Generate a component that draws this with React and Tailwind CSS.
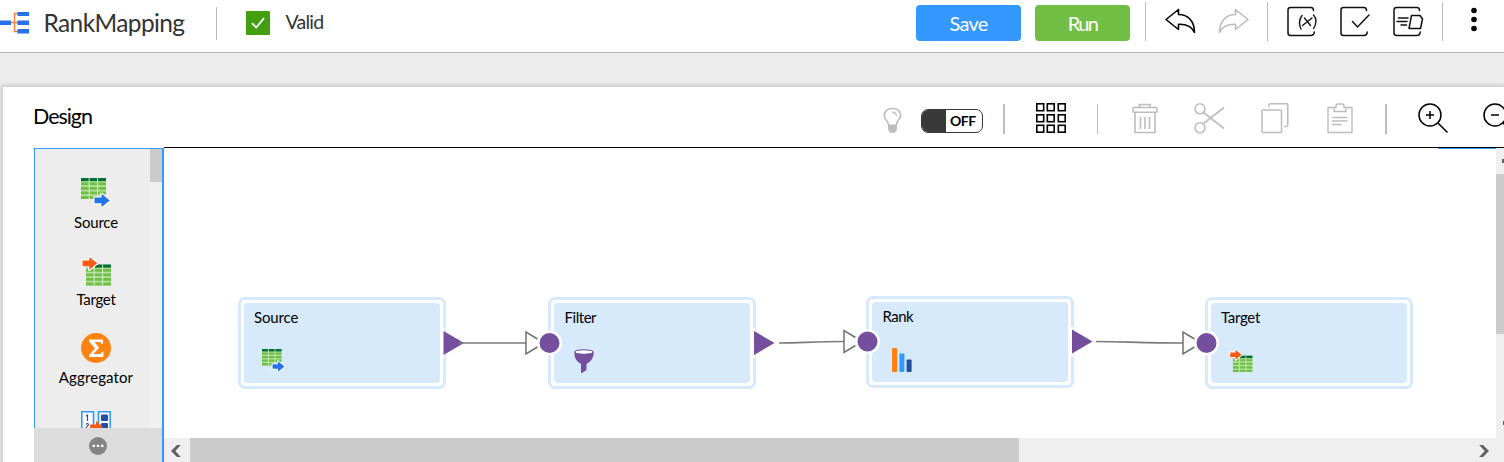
import React from 'react';

function Divider({ className }) {
  return <div className={`shrink-0 bg-[#bdbdbd] ${className}`} />;
}

function Logo() {
  return (
    <svg width="29" height="36" viewBox="0 0 29 36" className="shrink-0">
      <path d="M11 22.5h7M18 13.5h-3.5v18H18M14 22.5h5" fill="none" stroke="#ff7a3c" strokeWidth="1.4" />
      <path d="M0 20.5h11v4.5H0zM17.500 12h11.500v4H17.500zM17.500 20.500h11.500v4.500H17.500zM17.500 29h11.500v4.500H17.500z" fill="#2573e6" />
    </svg>
  );
}

function UndoIcon({ className }) {
  return (
    <svg width="31" height="26" viewBox="0 0 31 26" className={`shrink-0 ${className}`} fill="none" stroke="currentColor" strokeWidth="1.6" strokeLinejoin="round" strokeLinecap="round">
      <path d="M1 11.500 13.500 1.500V6.500C23 6.500 29.500 13 29.500 24.500C27 18.500 22 16 13.500 16.300V21.500Z" />
    </svg>
  );
}

function SheetIcon({ children, className }) {
  return (
    <svg width="32" height="32" viewBox="0 0 32 32" className={`shrink-0 ${className}`} fill="none" stroke="#111" strokeWidth="1.5" strokeLinecap="round">
      <path d="M26.500 4.500C26.500 2.500 26 1.500 24 1.500H3.500Q1 1.500 1 4V27Q1 29.500 3.500 29.500H23.500C26 29.500 27.200 28.500 27.200 26" />
      {children}
    </svg>
  );
}

function TableGrid({ x, y }) {
  return (
    <g transform={`translate(${x} ${y})`}>
      <rect width="25" height="21" fill="#b5dfa0" />
      <rect width="25" height="3.200" fill="#007036" />
      <path d="M0 4.500h25v2.800H0zM0 9h25v2.800H0zM0 13.500h25v2.800H0zM0 18h25v3H0z" fill="#70bf44" />
      <path d="M8.200 0v21M16.600 0v21" stroke="#d2efc6" strokeWidth="1" />
    </g>
  );
}

function SourceIcon({ size, className = '' }) {
  return (
    <svg width={size} height={size} viewBox="0 0 32 32" className={`block max-w-none overflow-visible ${className}`}>
      <TableGrid x={0} y={0} />
      <path d="M13.500 19.500H20.500V15.800L28.800 22.400L20.500 29V25.300H13.500Z" fill="#2573e6" stroke="#fff" strokeWidth="2.600" paintOrder="stroke" strokeLinejoin="round" />
    </svg>
  );
}

function TargetIcon({ size, className = '' }) {
  return (
    <svg width={size} height={size} viewBox="0 0 32 32" className={`block max-w-none overflow-visible ${className}`}>
      <TableGrid x={5} y={8.5} />
      <path d="M1.500 4.500H8.300V1L16.200 7.300L8.300 13.800V10.300H1.500Z" fill="#ff5a13" stroke="#fff" strokeWidth="2.400" paintOrder="stroke" strokeLinejoin="round" />
    </svg>
  );
}

function AggregatorIcon() {
  return (
    <svg width="30" height="30" viewBox="0 0 30 30" className="mt-px block">
      <circle cx="15" cy="15" r="15" fill="#ff8311" />
      <path d="M8 6.500H22V11H20.700Q20.300 9 18.500 9H13.500L18.200 14.700L12.300 21H18.500Q20.700 21 21 18.800H22.400V24H8V22.300L14 15.500L8 8.300Z" fill="#fff" />
    </svg>
  );
}

function ExpressionIcon() {
  return (
    <svg width="30" height="30" viewBox="0 0 30 30" className="mt-[1.500px] block">
      <path d="M.8.800H12.500V29H.8zM17.500.800H29.200V29H17.500z" fill="#fff" stroke="#3398ff" strokeWidth="1.600" />
      <rect x="20" y="3.500" width="7" height="6.500" rx="1.200" fill="#244f9f" />
      <rect x="20" y="12" width="7" height="6.500" rx="1.200" fill="#244f9f" />
      <path d="M5 5 6.500 4V10M5 13.500Q6.500 11.500 7.500 13.500L5 17" fill="none" stroke="#244f9f" strokeWidth="1.200" />
      <path d="M9 13.500H15V10L22 16L15 21V18.500H9Z" fill="#ff5a13" />
    </svg>
  );
}

function Header() {
  return (
    <header className="flex h-[53px] shrink-0 items-start border-b border-[#b5b5b5] bg-white">
      <Logo />
      <h1 className="ml-[14.500px] mt-[5px] w-[150.500px] whitespace-nowrap text-[24.500px] leading-9 tracking-[-0.620px] text-[#333]">RankMapping</h1>
      <Divider className="ml-[22px] mt-[7px] h-[33px] w-px" />
      <div className="ml-[29px] mt-[11px] flex size-6 shrink-0 items-center justify-center rounded-[1px] bg-[#449f10]">
        <svg width="14" height="12" viewBox="0 0 14 12" fill="none" stroke="#fff" strokeWidth="1.800">
          <path d="M1 6.200 5.200 10.500 13 1.200" />
        </svg>
      </div>
      <span className="ml-[15.500px] mt-2 text-[19.500px] leading-7 tracking-[-0.750px] text-[#333]">Valid</span>
      <div className="ml-auto flex w-[588px] shrink-0 items-start">
        <button className="mt-[5px] h-9 w-[105px] shrink-0 rounded-sm bg-[#3398ff] text-[20px] tracking-[-0.800px] text-white">Save</button>
        <button className="ml-3.5 mt-[5px] h-9 w-[95px] shrink-0 rounded-sm bg-[#70bf44] text-[20px] tracking-[-1.700px] text-white">Run</button>
        <Divider className="ml-[15px] mt-0.5 h-[39px] w-px" />
        <UndoIcon className="ml-[18.500px] mt-2 text-black" />
        <UndoIcon className="ml-[22px] mt-2 -scale-x-100 text-[#bdbdbd]" />
        <Divider className="ml-[18.500px] mt-0.5 h-[39px] w-px" />
        <SheetIcon className="ml-[19px] mt-1.5">
          <path d="M15 9.500Q10.500 15.500 14 23M26.500 9Q31.500 14.500 26.500 22.500M17.500 12 23.500 19.500M25 12 15.500 19.500" strokeWidth="1.400" />
        </SheetIcon>
        <SheetIcon className="ml-[21px] mt-1.5">
          <path d="M12.500 15.500 17.500 21 29 9" />
        </SheetIcon>
        <SheetIcon className="ml-[21px] mt-1.5">
          <path d="M5.500 12H15M4 15.500H14M8 19H13.500M18.500 9.500H27L29.500 13L27.500 22.500H16Z" strokeWidth="1.500" strokeLinejoin="round" />
        </SheetIcon>
        <Divider className="ml-[17px] mt-0.5 h-[39px] w-px" />
        <svg width="8" height="26" viewBox="0 0 8 26" className="ml-[26.500px] mt-[7px] shrink-0">
          <circle cx="4" cy="3.500" r="2.800" />
          <circle cx="4" cy="12.500" r="2.800" />
          <circle cx="4" cy="21.500" r="2.800" />
        </svg>
      </div>
    </header>
  );
}

function Toolbar() {
  return (
    <div className="flex h-[61px] shrink-0 items-start pl-[30px]">
      <h2 className="mt-[13px] w-[850px] shrink-0 text-[21.500px] leading-8 tracking-[-1.050px] text-black">Design</h2>
      <svg width="19" height="27" viewBox="0 0 19 27" className="mt-5 shrink-0" fill="none" stroke="#bdbdbd" strokeWidth="1.700">
        <path d="M5.500 18Q5.500 15.500 3.500 13.500C-1.500 7.500 2.500 1.500 9.500 1.500S20.500 7.500 15 13.500Q13.500 15.500 13.500 18" />
        <path d="M9.500 5Q13 5.500 13.500 9" strokeWidth="1.300" />
        <path d="M5 17.500H14V22Q13 26 9.500 26T5 22Z" fill="#bdbdbd" stroke="none" />
      </svg>
      <div className="ml-[19px] mt-[22px] flex h-6 w-[62px] shrink-0 items-stretch overflow-hidden rounded-[7px] border border-[#393939] bg-white">
        <span className="w-6 bg-[#393939]" />
        <span className="flex-1 pl-1 text-[14px] font-bold leading-[21px] tracking-[-0.500px] text-black">OFF</span>
      </div>
      <Divider className="ml-5 mt-[17px] h-[30px] w-0.5" />
      <svg width="30" height="30" viewBox="0 0 30 30" className="ml-[31px] mt-4 shrink-0" fill="none" stroke="#000" strokeWidth="1.600">
        {[0, 11, 21.5].map((y) => [0, 10.5, 21.5].map((x) => <rect key={`${x}-${y}`} x={x + 0.8} y={y + 0.8} width="6.900" height="6.900" />))}
      </svg>
      <Divider className="ml-[31px] mt-[17px] h-[30px] w-px" />
      <svg width="26" height="31" viewBox="0 0 26 31" className="ml-[34px] mt-[15.500px] shrink-0" fill="none" stroke="#bdbdbd" strokeWidth="1.600">
        <rect x="1" y="4.500" width="24" height="4.700" rx="1" />
        <path d="M7.500 4.500V1.500H18V4.500M3 9.500V29.500H23V9.500M8.500 14V26M13 14V26M17.500 14V26" />
      </svg>
      <svg width="31" height="31" viewBox="0 0 31 31" className="ml-9 mt-4 shrink-0" fill="none" stroke="#bdbdbd" strokeWidth="1.600">
        <circle cx="6" cy="5.800" r="5" />
        <circle cx="6" cy="24.800" r="5" />
        <path d="M9.500 9.500 30 25.500M9.500 20.500 30 4.500" />
      </svg>
      <svg width="28" height="31" viewBox="0 0 28 31" className="ml-9 mt-4 shrink-0" fill="none" stroke="#bdbdbd" strokeWidth="1.500">
        <rect x="1" y="7" width="19.500" height="22.500" rx="1" />
        <path d="M8 4V2Q8 .8 9.200.8H25.500Q26.800.8 26.800 2V22Q26.800 23.500 25.500 23.500H23" />
      </svg>
      <svg width="26" height="31" viewBox="0 0 26 31" className="ml-[38px] mt-4 shrink-0" fill="none" stroke="#bdbdbd" strokeWidth="1.400">
        <path d="M7 4.500H1V29.500H25V4.500H19M7 8.500V4.500H9V3Q9 1 11 1H15Q17 1 17 3V4.500H19V8.500ZM5 14.500H20.500M5 18H20.500M5 21.500H14.500" />
      </svg>
      <Divider className="ml-8 mt-[17px] h-[30px] w-0.5" />
      <svg width="31" height="31" viewBox="0 0 31 31" className="ml-[31px] mt-4 shrink-0" fill="none" stroke="#000" strokeWidth="1.500">
        <circle cx="12" cy="12" r="11" />
        <path d="M20 20 29.500 29.500M12 8V16M8 12H16" />
      </svg>
      <svg width="31" height="31" viewBox="0 0 31 31" className="ml-[34px] mt-4 shrink-0" fill="none" stroke="#000" strokeWidth="1.500">
        <circle cx="12" cy="12" r="11" />
        <path d="M20 20 29.500 29.500M8 12H16" />
      </svg>
    </div>
  );
}

function PaletteItem({ icon, label, labelClass }) {
  return (
    <div className="flex h-[77.500px] shrink-0 flex-col items-center">
      <div className="h-[35px] w-[30px]">{icon}</div>
      <span className={`whitespace-nowrap text-[15px] leading-5 text-black ${labelClass}`}>{label}</span>
    </div>
  );
}

function Palette() {
  return (
    <aside className="flex w-[130px] shrink-0 flex-col border-r-2 border-[#3398ff]">
      <div className="flex h-[280px] shrink-0 items-stretch overflow-hidden border-l border-t border-[#3398ff] bg-[#ededed]">
        <div className="flex flex-1 flex-col pl-[7px] pt-7">
          <PaletteItem icon={<SourceIcon size={32} className="mt-px" />} label="Source" labelClass="tracking-[-0.200px]" />
          <PaletteItem icon={<TargetIcon size={32} className="mt-[1.500px]" />} label="Target" labelClass="-mt-px tracking-[-0.300px]" />
          <PaletteItem icon={<AggregatorIcon />} label="Aggregator" labelClass="tracking-[0.100px]" />
          <PaletteItem icon={<ExpressionIcon />} label="" labelClass="" />
        </div>
        <div className="w-3 bg-[#f0f0f0]">
          <div className="h-[33px] bg-[#cbcbcb]" />
        </div>
      </div>
      <div className="flex flex-1 items-center justify-center bg-[#dcdcdc]">
        <svg width="18" height="18" viewBox="0 0 18 18" className="mb-[-2px]">
          <circle cx="9" cy="9" r="9" fill="#848484" />
          <path d="M3.500 7.800H6V10H3.500zM7.800 7.800H10.200V10H7.800zM12 7.800H14.500V10H12z" fill="#fff" />
        </svg>
      </div>
    </aside>
  );
}

function FilterIcon() {
  return (
    <svg width="20" height="25" viewBox="0 0 20 25" className="block">
      <path d="M.5 3V6Q.5 11 7 15V24.500L12.500 21V15Q19 11 19.500 6V3Z" fill="#734f9d" />
      <ellipse cx="10" cy="3" rx="9" ry="2.200" fill="#fff" stroke="#734f9d" strokeWidth="1.100" />
    </svg>
  );
}

function RankIcon() {
  return (
    <svg width="20" height="24" viewBox="0 0 20 24" className="block">
      <rect width="5.200" height="24" rx=".8" fill="#ff8311" />
      <rect x="7.400" y="5.500" width="5" height="18.500" rx=".8" fill="#3398ff" />
      <rect x="14.600" y="11.500" width="5" height="12.500" rx=".8" fill="#244f9f" />
    </svg>
  );
}

function Node({ position, label, icon, iconClass, labelClass }) {
  return (
    <div className={`absolute h-[92px] w-[208px] rounded-[7px] border-[3px] border-[#d6eafc] bg-white p-[3px] ${position}`}>
      <div className="h-full rounded-[4px] bg-[#d6eafc] pl-2.5 pt-1">
        <div className={`h-[21px] text-[15px] leading-5 text-black ${labelClass}`}>{label}</div>
        <div className={iconClass}>{icon}</div>
      </div>
    </div>
  );
}

function OutPort({ x, y }) {
  return (
    <g>
      <path d={`M${x - 1} ${y - 15}V${y + 15}`} stroke="#fff" strokeWidth="4" />
      <path d={`M${x} ${y - 12}L${x + 20.5} ${y}L${x} ${y + 12}Z`} fill="#734f9d" />
    </g>
  );
}

function InPort({ x, y }) {
  return (
    <g>
      <path d={`M${x - 12} ${y - 4}L${x - 23.5} ${y - 11}V${y + 11}L${x - 12} ${y + 4}`} fill="none" stroke="#707070" strokeWidth="1.500" />
      <circle cx={x} cy={y} r="12.500" fill="#fff" />
      <circle cx={x} cy={y} r="10" fill="#734f9d" />
    </g>
  );
}

function Canvas() {
  return (
    <div className="relative flex-1 overflow-hidden bg-white">
      <div className="ml-auto h-px w-[58px] bg-[#3398ff]" />
      <Node position="left-[74px] top-[149px]" label="Source" labelClass="tracking-[-0.150px]" icon={<SourceIcon size={25} />} iconClass="ml-[8px] mt-[21px]" />
      <Node position="left-[384px] top-[149px]" label="Filter" labelClass="pl-[0.500px] tracking-[-0.450px]" icon={<FilterIcon />} iconClass="ml-[10px] mt-[21px]" />
      <Node position="left-[702px] top-[147.500px]" label="Rank" labelClass="pl-[0.500px] tracking-[-0.500px]" icon={<RankIcon />} iconClass="ml-[10px] mt-[21px]" />
      <Node position="left-[1041px] top-[149px]" label="Target" labelClass="tracking-[-0.300px]" icon={<TargetIcon size={25} />} iconClass="ml-[8px] mt-[21px]" />
      <svg width="1332" height="290" viewBox="164 148 1332 290" className="absolute left-0 top-0">
        <OutPort x={443.5} y={343} />
        <OutPort x={754} y={343} />
        <OutPort x={1072} y={341.5} />
        <path d="M458 343H526M779 343C800 343 815 341.500 844 341.500M1096 341.500C1120 341.500 1145 343 1183 343" fill="none" stroke="#7b7b7b" strokeWidth="1.700" />
        <InPort x={549.5} y={343} />
        <InPort x={867.5} y={341.5} />
        <InPort x={1206.5} y={343} />
      </svg>
    </div>
  );
}

function Chevron({ className }) {
  return (
    <svg width="10" height="12" viewBox="0 0 10 12" className={`shrink-0 ${className}`} fill="#606060">
      <path d="M6 0H9.800L4.300 6L9.800 12H6L0 6Z" />
    </svg>
  );
}

export default function App() {
  return (
    <div className="flex h-[462px] w-full flex-col overflow-hidden bg-[#ededed] font-['Lato',sans-serif]">
      <Header />
      <main className="ml-[3px] mt-[34px] flex flex-1 flex-col bg-white shadow-[0_0_4px_2px_rgba(0,0,0,0.150)]">
        <Toolbar />
        <div className="flex flex-1 items-stretch pl-[31px]">
          <Palette />
          <section className="-mt-px flex min-w-0 flex-1 flex-col border-t border-black">
            <div className="flex h-[290px] shrink-0">
              <Canvas />
              <div className="flex w-2 shrink-0 flex-col overflow-hidden bg-[#efefef]">
                <div className="flex h-[26px] items-center justify-end">
                  <span className="h-1 w-0.5 bg-[#606060]" />
                </div>
                <div className="h-40 bg-[#cbcbcb]" />
                <span className="ml-auto mt-[87px] h-1 w-px bg-[#606060]" />
              </div>
            </div>
            <div className="flex flex-1 items-center bg-[#efefef]">
              <Chevron className="ml-[7px] mt-0.5" />
              <div className="ml-[9px] h-full w-[829px] bg-[#cbcbcb]" />
              <Chevron className="ml-auto mr-[15px] mt-0.5 rotate-180" />
            </div>
          </section>
        </div>
      </main>
    </div>
  );
}
